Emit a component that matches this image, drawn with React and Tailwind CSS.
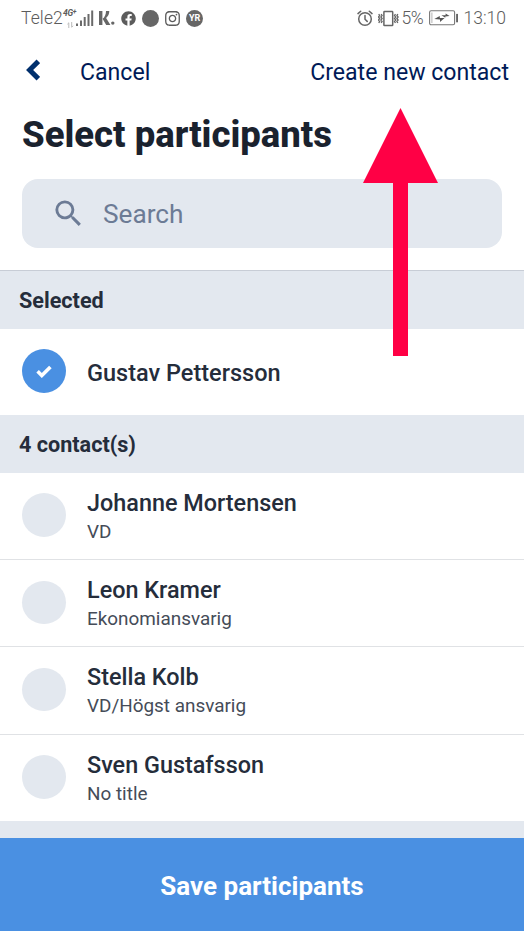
import { FaFacebook, FaInstagram } from 'react-icons/fa'
import { MdSearch } from 'react-icons/md'

const contacts = [
  { name: 'Johanne Mortensen', title: 'VD' },
  { name: 'Leon Kramer', title: 'Ekonomiansvarig' },
  { name: 'Stella Kolb', title: 'VD/Högst ansvarig' },
  { name: 'Sven Gustafsson', title: 'No title' },
]

function SignalBars() {
  return (
    <svg width="18" height="18" viewBox="0 0 18 18" fill="#6a6a6a" className="shrink-0">
      <rect x="0" y="14.5" width="2" height="2.5" />
      <rect x="4" y="11.5" width="2" height="5.5" />
      <rect x="7.7" y="8" width="2" height="9" />
      <rect x="11.5" y="5" width="2" height="12" />
      <rect x="15.2" y="1.5" width="2" height="15.5" />
    </svg>
  )
}

function KLogo() {
  return (
    <svg width="16" height="14" viewBox="0 0 16 14" fill="#666" className="shrink-0">
      <rect x="0" y="0" width="3.4" height="14" />
      <path d="M7 0h3.3c0 2.9-1.2 5.3-3.2 6.9L11.4 14H7.2L3.6 7.8C5.8 6.2 7 3.5 7 0z" />
      <circle cx="13.8" cy="12.1" r="1.7" />
    </svg>
  )
}

function AlarmIcon() {
  return (
    <svg width="16" height="17" viewBox="0 0 16 17" fill="none" stroke="#666" strokeWidth="1.5" strokeLinecap="round" className="shrink-0">
      <circle cx="8" cy="9" r="6.3" />
      <path d="M8 5.5v3.7l2.2 2.2M1 3.6l2.7-2.4M15 3.6l-2.7-2.4" />
    </svg>
  )
}

function VibrateIcon() {
  return (
    <svg width="21" height="17" viewBox="0 0 21 17" fill="none" stroke="#666" strokeWidth="1.5" className="shrink-0">
      <rect x="5.9" y="1.6" width="8.8" height="14" rx=".6" />
      <path d="M3.1 4l1 1.5L2.9 7l1.2 1.5L2.9 10l1.2 1.5-1 1.5M.7 4l1 1.5L.5 7l1.2 1.5L.5 10l1.2 1.5-1 1.5" strokeWidth="1.3" />
      <path d="M17.5 4l-1 1.5L17.7 7l-1.2 1.5 1.2 1.5-1.2 1.5 1 1.5M19.9 4l-1 1.5L20.1 7l-1.2 1.5 1.2 1.5-1.2 1.5 1 1.5" strokeWidth="1.3" />
    </svg>
  )
}

function BatteryIcon() {
  return (
    <svg width="30" height="16" viewBox="0 0 30 16" fill="none" className="shrink-0">
      <rect x=".6" y=".8" width="25" height="14" rx="1.5" stroke="#777" strokeWidth="1.1" />
      <path d="M2.9 2.5v10.5" stroke="#aaa" strokeWidth=".9" />
      <path d="M5.3 9l5.5-3v1.9h4.8l-4.6 4V9.6z" fill="#555" />
      <path d="M20.6 6l-4-2.6v1.9h-4.2l3.9 2.5V6.4z" fill="#555" />
      <rect x="27.1" y="3.9" width="1.9" height="8.4" fill="#666" />
    </svg>
  )
}

function ChevronIcon() {
  return (
    <svg width="14" height="22" viewBox="0 0 14 22" fill="none" stroke="#002f6c" strokeWidth="5" className="shrink-0 -mt-1">
      <path d="M12.3 2.3L3.6 11l8.7 8.7" />
    </svg>
  )
}

function CheckIcon() {
  return (
    <svg width="16" height="13" viewBox="0 0 16 13" fill="none" stroke="#fff" strokeWidth="3.6">
      <path d="M1.6 6.3l4.2 4.2 8.6-8.6" />
    </svg>
  )
}

function StatusBar() {
  return (
    <div className="h-9 pl-[21px] pr-[18px] flex items-center justify-between text-[#5c5c5c]">
      <div className="flex items-center">
        <span className="w-[42px] text-[17.5px] leading-9 font-light tracking-[0.1px]">Tele2</span>
        <span className="w-[13px] h-[19px] flex flex-col text-[8.5px] leading-[9px] font-bold italic tracking-[-0.3px] whitespace-nowrap">
          <span>4G<span className="relative -top-[2px] text-[7px]">+</span></span>
          <svg width="7" height="6" viewBox="0 0 7 6" fill="none" stroke="#bbb" className="ml-[4px] mt-[3px] shrink-0">
            <path d="M1.8 6V.8L.4 2.2M4.7 0v5.2l1.5-1.4" />
          </svg>
        </span>
        <SignalBars />
        <span className="w-[5px]" />
        <KLogo />
        <FaFacebook size={15} className="ml-[6px]" />
        <span className="ml-[6px] w-[17px] h-[17px] rounded-full bg-[#666]" />
        <FaInstagram size={17} className="ml-[5px]" />
        <span className="ml-[5px] w-[17px] h-[17px] rounded-full bg-[#666] text-white text-[9px] leading-[17px] font-bold text-center tracking-[-0.1px]">YR</span>
      </div>
      <div className="flex items-center">
        <AlarmIcon />
        <span className="w-[5px]" />
        <VibrateIcon />
        <span className="ml-[2px] w-[28px] text-[17.5px] leading-9 font-light tracking-[-0.5px]">5%</span>
        <BatteryIcon />
        <span className="ml-[4px] text-[17.5px] leading-9 font-light">13:10</span>
      </div>
    </div>
  )
}

function SectionHeader({ children, className }) {
  return (
    <h2 className={`pl-[19px] pt-[2px] bg-[#e3e8ef] text-[#252d3b] text-[21.6px] font-bold flex items-center ${className}`}>
      {children}
    </h2>
  )
}

export default function App() {
  return (
    <div className="relative w-[524px] h-[931px] bg-white overflow-hidden flex flex-col font-['Roboto',sans-serif]">
      <StatusBar />
      <nav className="h-[72px] pl-[26px] pr-[15px] flex items-center text-[#001a57] text-[23.1px] leading-7">
        <ChevronIcon />
        <button className="ml-[40px] pt-[2px]">Cancel</button>
        <button className="ml-auto pt-[2px] whitespace-nowrap">Create new contact</button>
      </nav>
      <h1 className="h-[71px] pl-[22px] pt-[6px] text-[36.5px] leading-[42px] font-extrabold text-[#1a222e] whitespace-nowrap">
        Select participants
      </h1>
      <div className="h-[69px] mx-[22px] shrink-0 rounded-2xl bg-[#e3e8ef] flex items-center text-[#6c7b95]">
        <MdSearch size={35} className="ml-[29px]" />
        <span className="ml-[17px] pt-[2px] text-[26.2px]">Search</span>
      </div>
      <SectionHeader className="mt-[22px] h-[59px] border-t border-[#c8cdd6]">Selected</SectionHeader>
      <div className="h-[86px] pl-[22px] flex items-center">
        <span className="w-[43.5px] h-[43.5px] -mt-[2px] rounded-full bg-[#4a90e2] flex items-center justify-center">
          <CheckIcon />
        </span>
        <span className="ml-[21.5px] pt-[3px] text-[23.5px] font-medium text-[#252d3b]">Gustav Pettersson</span>
      </div>
      <SectionHeader className="h-[58px]">4 contact(s)</SectionHeader>
      <ul>
        {contacts.map(({ name, title }) => (
          <li key={name} className="h-[87.2px] pl-[22px] flex items-center border-b border-[#e0e2e5] last:h-[86.4px] last:border-0">
            <span className="w-[43.5px] h-[43.5px] -mt-[2px] rounded-full bg-[#e3e8ef]" />
            <div className="ml-[21.5px] pt-[2px]">
              <p className="text-[23.4px] leading-[30px] font-medium text-[#252d3b]">{name}</p>
              <p className="text-[18.9px] leading-[28px] text-[#454c58]">{title}</p>
            </div>
          </li>
        ))}
      </ul>
      <div className="flex-1 bg-[#e3e8ef]" />
      <button className="h-[93.5px] shrink-0 bg-[#4a90e2] text-white text-[26px] font-bold pt-[4px]">
        Save participants
      </button>
      {/* pointer laid over the header, aimed at "Create new contact" */}
      <svg width="75" height="248" viewBox="0 0 75 248" fill="#ff0045" className="absolute left-[363px] top-[108px]">
        <path d="M37.5 0L75 75H45v173H30V75H0z" />
      </svg>
    </div>
  )
}
